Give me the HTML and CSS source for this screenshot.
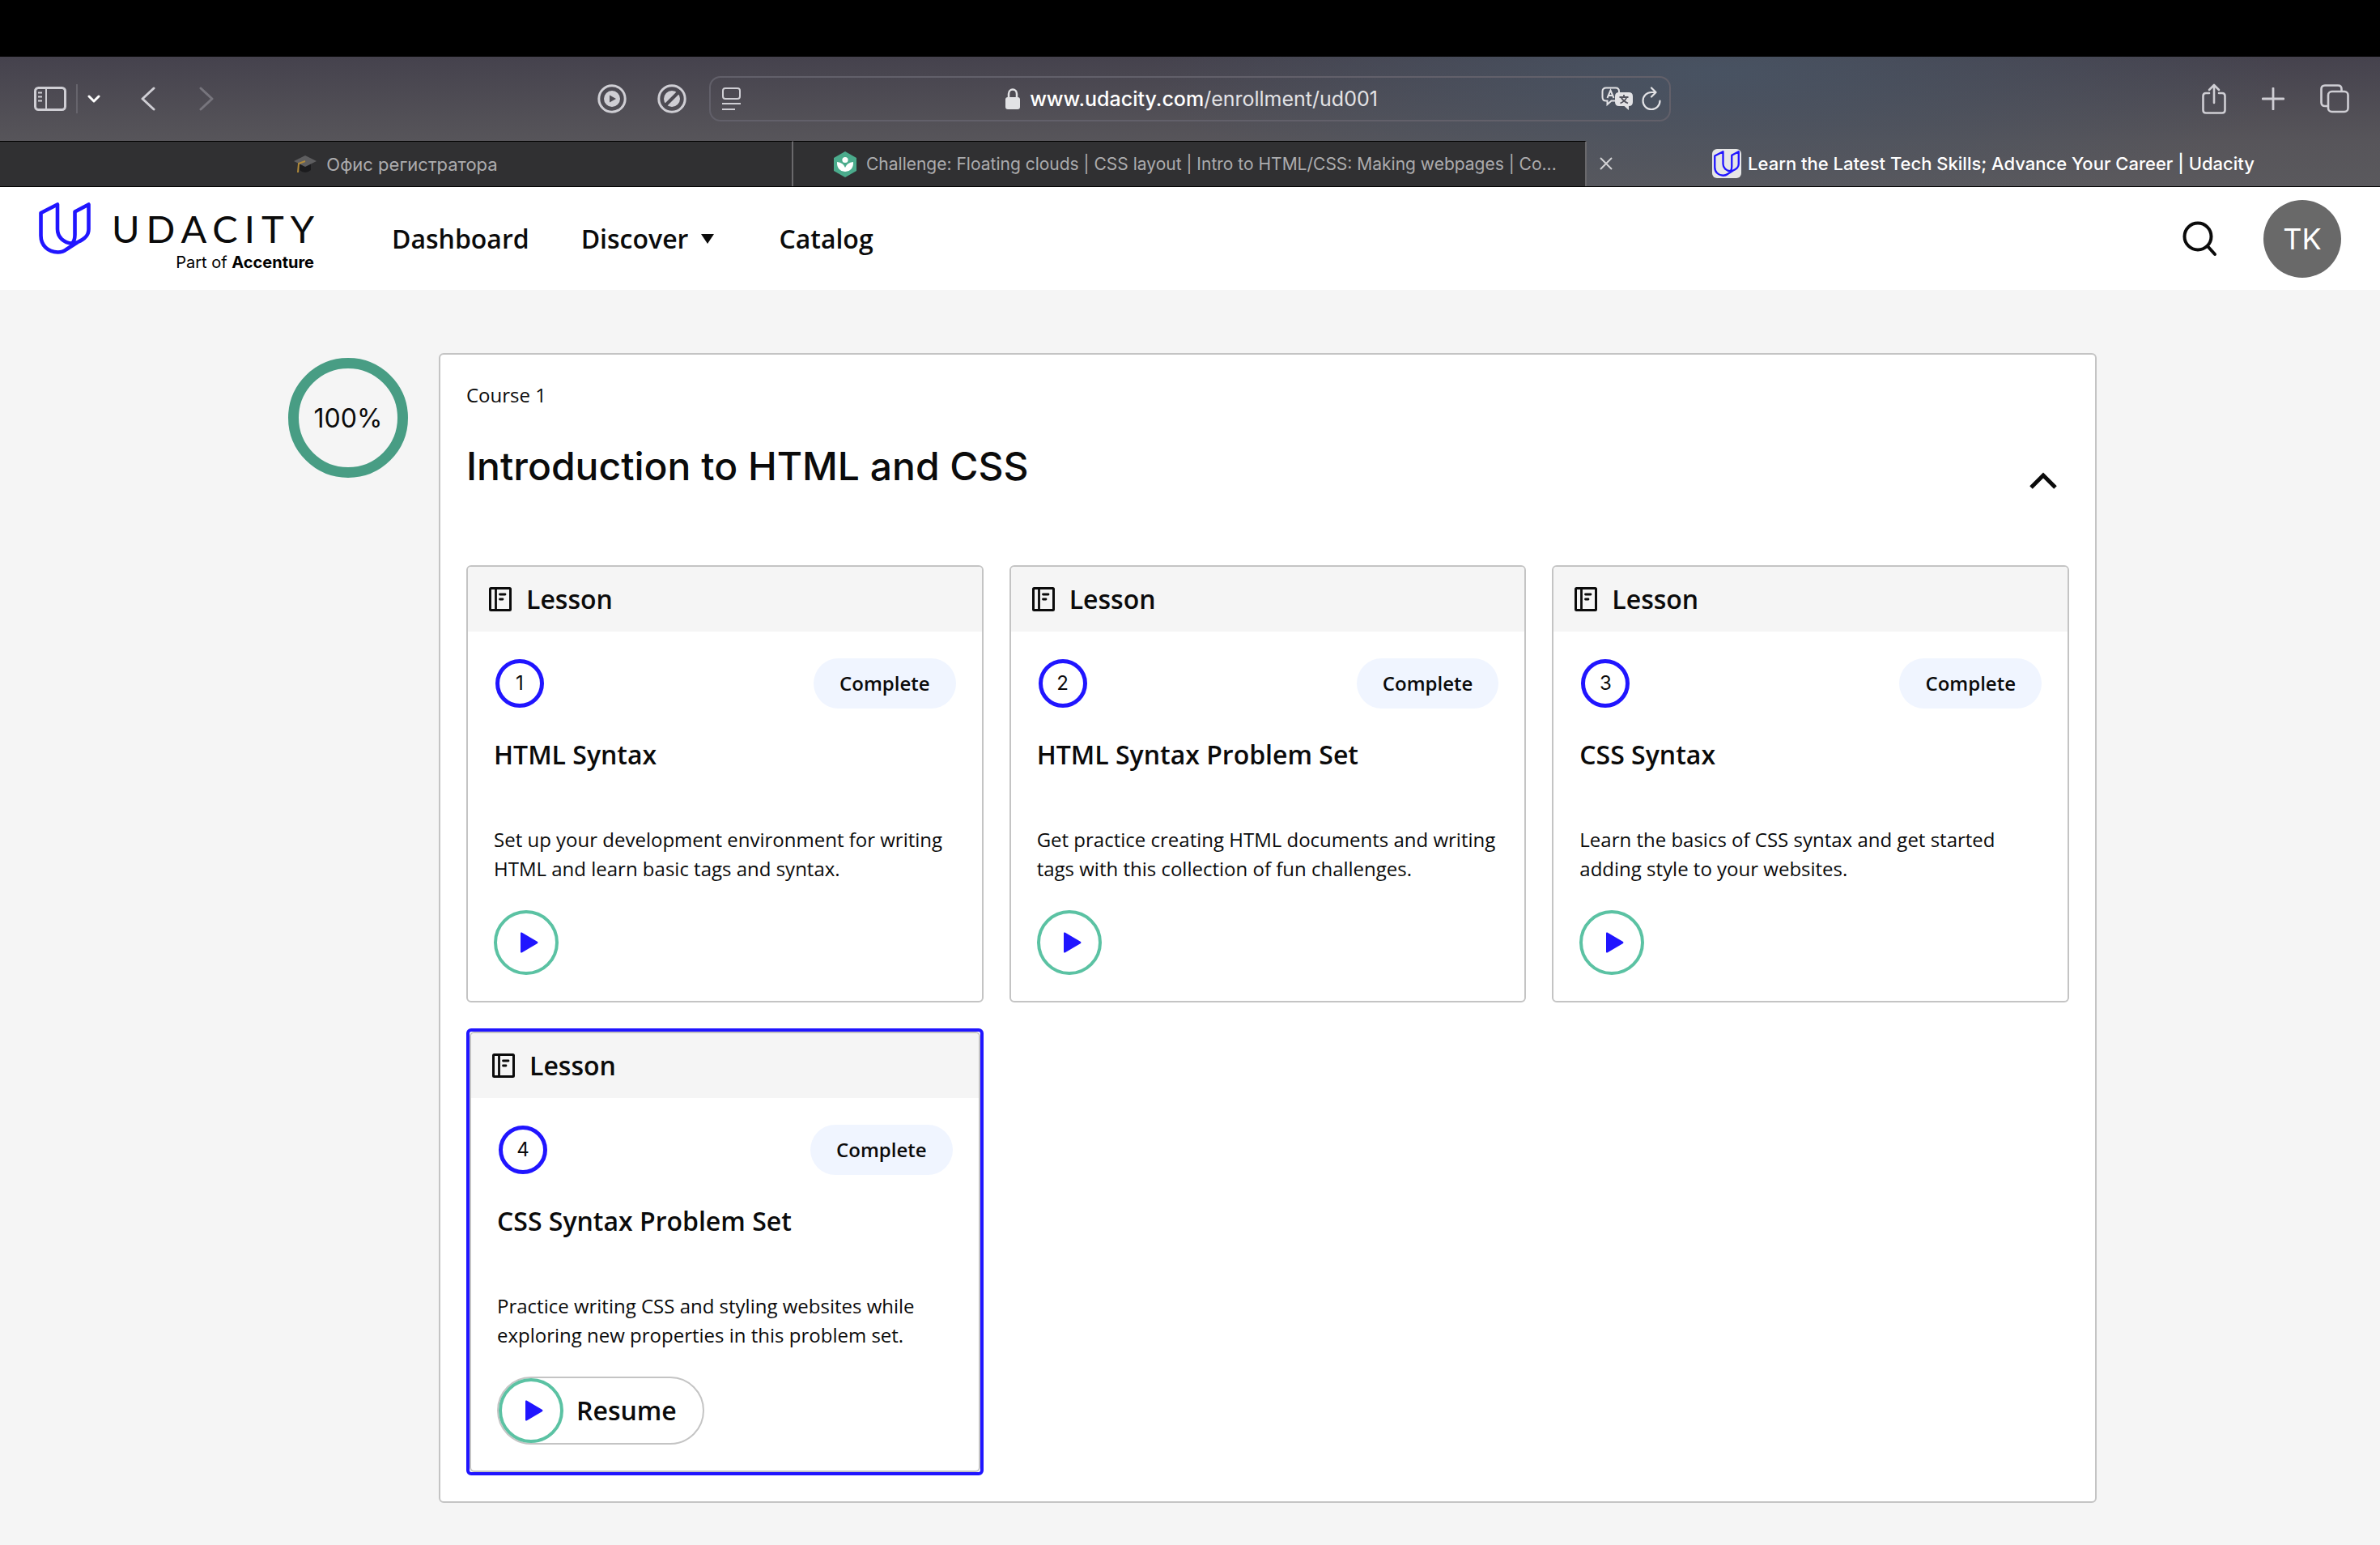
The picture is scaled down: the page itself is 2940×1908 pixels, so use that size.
FILE: index.html
```html
<!DOCTYPE html>
<html lang="en">
<head>
<meta charset="utf-8">
<title>Learn the Latest Tech Skills; Advance Your Career | Udacity</title>
<link rel="stylesheet" href="styles.css">
</head>
<body>
<svg class="sprite" aria-hidden="true">
  <symbol id="u-mark" viewBox="0 0 64 64">
    <path d="M2.500 13 L23 2.500 V33 C23 43 31 50 41 50.500 C44 48 44.500 44 44.500 40 V11.500 L61.500 2.500 V33 C61.500 42 55 46 48 49 L34 58 C31 60.500 28 61.500 23.500 61.500 C11 61 2.500 53 2.500 41 Z" fill="none" stroke="currentColor" stroke-width="4.600" stroke-linejoin="round"/>
  </symbol>
  <symbol id="book" viewBox="0 0 28 30">
    <rect x="1.500" y="1.500" width="25" height="27" rx="1" fill="none" stroke="currentColor" stroke-width="3"/>
    <path d="M8.500 1 V29 M13.500 9 H20 M13.500 15 H17" fill="none" stroke="currentColor" stroke-width="2.800" stroke-linecap="round"/>
  </symbol>
  <symbol id="play" viewBox="0 0 22 26">
    <path d="M0 1.500 Q0 0 1.500 0.600 L21 12 Q22 13 21 14 L1.500 25.400 Q0 26 0 24.500 Z" fill="currentColor"/>
  </symbol>
</svg>

<div class="notch-bar"></div>
<div class="browser">
  <div class="toolbar">
    <div class="tools tools-left">
      <button class="tool" aria-label="Sidebar"><svg width="40" height="32" viewBox="0 0 40 32"><rect x="1.500" y="2.500" width="37" height="27" rx="4" fill="none" stroke="currentColor" stroke-width="3"/><path d="M15 3 V29 M5 8.500 H10 M5 13.500 H10 M5 18.500 H10" fill="none" stroke="currentColor" stroke-width="2"/></svg></button>
      <span class="divider"></span>
      <button class="tool bright" aria-label="Tab groups"><svg width="16" height="12" viewBox="0 0 16 12"><path d="M2 3 L8 9 L14 3" fill="none" stroke="currentColor" stroke-width="3" stroke-linecap="round" stroke-linejoin="round"/></svg></button>
      <button class="tool back" aria-label="Back"><svg width="18" height="30" viewBox="0 0 18 30"><path d="M16 2 L2 15 L16 28" fill="none" stroke="currentColor" stroke-width="3" stroke-linecap="round" stroke-linejoin="round"/></svg></button>
      <button class="tool forward" aria-label="Forward"><svg width="18" height="30" viewBox="0 0 18 30"><path d="M2 2 L16 15 L2 28" fill="none" stroke="currentColor" stroke-width="3" stroke-linecap="round" stroke-linejoin="round"/></svg></button>
    </div>
    <div class="tools tools-ext">
      <button class="tool" aria-label="Media blocker"><svg width="36" height="36" viewBox="0 0 36 36"><circle cx="18" cy="18" r="16.200" fill="none" stroke="currentColor" stroke-width="3"/><path fill-rule="evenodd" d="M18 8 A10 10 0 1 0 18 28 A10 10 0 1 0 18 8 Z M15 13.500 L23 18 L15 22.500 Z" fill="currentColor"/></svg></button>
      <button class="tool" aria-label="Content blocker"><svg width="36" height="36" viewBox="0 0 36 36"><circle cx="18" cy="18" r="16.200" fill="none" stroke="currentColor" stroke-width="3"/><circle cx="18" cy="18" r="10" fill="currentColor"/><path d="M9 27 L27 9" stroke="#4b4951" stroke-width="4"/></svg></button>
    </div>
    <div class="address">
      <svg width="24" height="28" viewBox="0 0 24 28"><rect x="1" y="1" width="21" height="13" rx="3" fill="none" stroke="currentColor" stroke-width="2"/><path d="M0 20 H23 M0 27 H16" stroke="currentColor" stroke-width="2"/></svg>
      <div class="url"><svg width="18" height="26" viewBox="0 0 18 26"><rect x="0" y="11" width="18" height="15" rx="3" fill="currentColor"/><path d="M4 12 V7 A5 5.500 0 0 1 14 7 V12" fill="none" stroke="currentColor" stroke-width="2.500"/></svg><span class="url-text"><b>www.udacity.com</b>/enrollment/ud001</span></div>
      <div class="address-actions">
        <button class="tool pale" aria-label="Translate"><svg width="40" height="30" viewBox="0 0 40 30"><path d="M17 17.500 H12.500 L7.500 22 V17.500 H6 Q1.500 17.500 1.500 13 V6 Q1.500 1.500 6 1.500 H18 Q22 1.500 22 6 V8" fill="none" stroke="currentColor" stroke-width="2"/><path d="M7.500 14 L11.500 4.500 L15.500 14 M9 11 H14" fill="none" stroke="currentColor" stroke-width="2"/><path d="M22 7 H34 Q39 7 39 12 V19 Q39 24 34 24 V29 L28.500 24 H22 Q17 24 17 19 V12 Q17 7 22 7 Z" fill="currentColor"/><path d="M22.500 13 H33.500 M28 10 V13 M24.500 13 Q27 18 33 20.500 M31.500 13 Q29.500 18 23.500 20.500" fill="none" stroke="#50515b" stroke-width="1.800"/></svg></button>
        <button class="tool pale" aria-label="Reload"><svg width="24" height="30" viewBox="0 0 24 30"><path d="M16 7 H12 A10.500 10.500 0 1 0 22.500 17.500" fill="none" stroke="currentColor" stroke-width="2.200" stroke-linecap="round"/><path d="M12 1.500 L17.500 7 L12 12.500" fill="none" stroke="currentColor" stroke-width="2.200" stroke-linecap="round" stroke-linejoin="round"/></svg></button>
      </div>
    </div>
    <div class="tools tools-right">
      <button class="tool" aria-label="Share"><svg width="30" height="38" viewBox="0 0 30 38"><path d="M9 12 H5 Q1.500 12 1.500 15.500 V33 Q1.500 36.500 5 36.500 H25 Q28.500 36.500 28.500 33 V15.500 Q28.500 12 25 12 H21 M15 24 V2 M9 8 L15 2 L21 8" fill="none" stroke="currentColor" stroke-width="2.600" stroke-linecap="round" stroke-linejoin="round"/></svg></button>
      <button class="tool" aria-label="New tab"><svg width="28" height="28" viewBox="0 0 28 28"><path d="M1 14 H27 M14 1 V27" stroke="currentColor" stroke-width="2.800" stroke-linecap="round"/></svg></button>
      <button class="tool" aria-label="Tab overview"><svg width="36" height="36" viewBox="0 0 36 36"><rect x="10" y="9" width="24.500" height="25" rx="4.500" fill="none" stroke="currentColor" stroke-width="2.600"/><path d="M9 27 H6 Q1.500 27 1.500 22.500 V6 Q1.500 1.500 6 1.500 H22 Q26.500 1.500 26.500 6 V8" fill="none" stroke="currentColor" stroke-width="2.600"/></svg></button>
    </div>
  </div>
  <div class="tabs">
    <a class="tab" href="#"><svg width="28" height="22" viewBox="0 0 28 22"><path d="M7 10 V18 Q14 24 21 18 V10 Z" fill="#1c1c1e"/><path d="M14 0 L28 7 L14 14 L0 7 Z" fill="#5e5e60"/><path d="M14 7 L6 10 L5 21" fill="none" stroke="#b08a3a" stroke-width="2"/></svg><span class="tab-text">Офис регистратора</span></a>
    <a class="tab tab-long" href="#"><svg width="28" height="32" viewBox="0 0 28 32"><path d="M14 0 L28 8 V24 L14 32 L0 24 V8 Z" fill="#4bab8c"/><circle cx="14" cy="10.500" r="3.600" fill="#fff"/><path d="M14 25 Q3.500 24 4 13 Q12 14 14 20 Q16 14 24 13 Q24.500 24 14 25 Z" fill="#fff"/></svg><span class="tab-text">Challenge: Floating clouds | CSS layout | Intro to HTML/CSS: Making webpages | Co...</span></a>
    <div class="tab active"><button class="tool close" aria-label="Close tab"><svg width="16" height="16" viewBox="0 0 16 16"><path d="M1 1 L15 15 M15 1 L1 15" stroke="currentColor" stroke-width="2"/></svg></button><a class="tab-link" href="#"><span class="favicon"><svg width="32" height="32"><use href="#u-mark"/></svg></span><span class="tab-text">Learn the Latest Tech Skills; Advance Your Career | Udacity</span></a></div>
  </div>
</div>

<header class="site-header">
  <a class="logo" href="#" aria-label="Udacity, part of Accenture">
    <svg class="logo-mark" width="64" height="64"><use href="#u-mark"/></svg>
    <span class="logo-words"><span class="wordmark">UDACITY</span><span class="tagline">Part of <b>Accenture</b></span></span>
  </a>
  <nav class="nav">
    <a href="#">Dashboard</a>
    <a class="has-menu" href="#">Discover <svg class="caret" width="16" height="12" viewBox="0 0 16 12"><path d="M0 0 H16 L8 12 Z" fill="currentColor"/></svg></a>
    <a href="#">Catalog</a>
  </nav>
  <div class="account">
    <button class="search" aria-label="Search"><svg width="44" height="44" viewBox="0 0 44 44"><circle cx="19" cy="19" r="16.500" fill="none" stroke="currentColor" stroke-width="4"/><path d="M31 31 L40 41" stroke="currentColor" stroke-width="4" stroke-linecap="round"/></svg></button>
    <button class="avatar">TK</button>
  </div>
</header>

<main class="page">
  <div class="progress">100%</div>
  <section class="course">
    <p class="course-label">Course 1</p>
    <div class="course-head">
      <h1>Introduction to HTML and CSS</h1>
      <button class="collapse" aria-label="Collapse course"><svg width="36" height="24" viewBox="0 0 36 24"><path d="M3 20 L18 5 L33 20" fill="none" stroke="currentColor" stroke-width="5"/></svg></button>
    </div>
    <div class="lessons">
      <article class="lesson"><div class="lesson-card">
        <div class="lesson-type"><svg width="28" height="30"><use href="#book"/></svg>Lesson</div>
        <div class="lesson-body">
          <div class="lesson-status"><span class="number">1</span><span class="pill">Complete</span></div>
          <h2>HTML Syntax</h2>
          <p>Set up your development environment for writing HTML and learn basic tags and syntax.</p>
          <button class="play" aria-label="Open HTML Syntax"><svg width="22" height="26"><use href="#play"/></svg></button>
        </div>
      </div></article>
      <article class="lesson"><div class="lesson-card">
        <div class="lesson-type"><svg width="28" height="30"><use href="#book"/></svg>Lesson</div>
        <div class="lesson-body">
          <div class="lesson-status"><span class="number">2</span><span class="pill">Complete</span></div>
          <h2>HTML Syntax Problem Set</h2>
          <p>Get practice creating HTML documents and writing tags with this collection of fun challenges.</p>
          <button class="play" aria-label="Open HTML Syntax Problem Set"><svg width="22" height="26"><use href="#play"/></svg></button>
        </div>
      </div></article>
      <article class="lesson"><div class="lesson-card">
        <div class="lesson-type"><svg width="28" height="30"><use href="#book"/></svg>Lesson</div>
        <div class="lesson-body">
          <div class="lesson-status"><span class="number">3</span><span class="pill">Complete</span></div>
          <h2>CSS Syntax</h2>
          <p>Learn the basics of CSS syntax and get started adding style to your websites.</p>
          <button class="play" aria-label="Open CSS Syntax"><svg width="22" height="26"><use href="#play"/></svg></button>
        </div>
      </div></article>
      <article class="lesson current"><div class="lesson-card">
        <div class="lesson-type"><svg width="28" height="30"><use href="#book"/></svg>Lesson</div>
        <div class="lesson-body">
          <div class="lesson-status"><span class="number">4</span><span class="pill">Complete</span></div>
          <h2>CSS Syntax Problem Set</h2>
          <p>Practice writing CSS and styling websites while exploring new properties in this problem set.</p>
          <button class="resume"><span class="play"><svg width="22" height="26"><use href="#play"/></svg></span>Resume</button>
        </div>
      </div></article>
    </div>
  </section>
</main>
</body>
</html>
```
FILE: styles.css
```css
:root {
  --ink: #0b0b0b;
  --blue: #2015ff;
  --line: #c4c4c4;
  --mist: #f5f5f5;
}

* { box-sizing: border-box; }

body {
  margin: 0;
  background: var(--mist);
  color: var(--ink);
  font: 24px/36px "Open Sans", sans-serif;
}

svg { display: block; flex: none; }
h1, h2, p { margin: 0; }
a { color: inherit; text-decoration: none; }
button {
  margin: 0;
  padding: 0;
  border: 0;
  background: none;
  color: inherit;
  font: inherit;
}
.sprite { position: absolute; width: 0; height: 0; }

/* Browser window */
.notch-bar { height: 70px; background: #000; }

.browser {
  background:
    radial-gradient(ellipse 700px 180px at 2120px 20px, rgba(72, 84, 100, 0.9), rgba(72, 84, 100, 0)),
    linear-gradient(#45424d, #57555a 65%, #5a595d);
  border-bottom: 1px solid #000;
  color: #cfced4;
  font-family: Inter, sans-serif;
}

.toolbar {
  display: grid;
  grid-template-columns: 738fr 138px 1188px 876fr;
  align-items: center;
  height: 104px;
}
.tools { display: flex; align-items: center; }
.tools-left { padding-left: 42px; }
.tools-ext { gap: 38px; }
.tools-right { justify-content: flex-end; gap: 44px; padding-right: 38px; }
.divider { width: 2px; height: 36px; margin: 0 12px; background: #66646c; }
.bright { color: #fff; }
.pale { color: #e2e2e5; }
.back { margin-left: 50px; }
.forward { margin-left: 54px; color: #77757d; }

.address {
  display: grid;
  grid-template-columns: 1fr auto 1fr;
  align-items: center;
  height: 56px;
  padding: 0 10px 0 14px;
  border: 2px solid #62606a;
  border-radius: 14px;
}
.url { display: flex; align-items: center; gap: 12px; color: #e2e2e5; }
.url-text { font-size: 25px; }
.url b { color: #fff; font-weight: 500; }
.address-actions { display: flex; justify-content: flex-end; gap: 10px; }

.tabs { display: grid; grid-template-columns: repeat(3, minmax(0, 1fr)); }
.tab {
  display: flex;
  align-items: center;
  justify-content: center;
  gap: 12px;
  height: 56px;
  padding: 0 12px;
  border-top: 1px solid #000;
  border-right: 2px solid #6a696c;
  background: #303032;
  color: #acacae;
  font-size: 22px;
}
.tab-long { justify-content: flex-start; padding-left: 50px; font-size: 21px; }
.tab-text { overflow: hidden; text-overflow: ellipsis; white-space: nowrap; }
.active {
  display: grid;
  grid-template-columns: 16px minmax(0, 1fr) 16px;
  gap: 0;
  padding: 0 16px;
  border: 0;
  background: none;
  color: #fff;
  font-weight: 500;
}
.close { color: #d2d2d4; }
.tab-link {
  display: flex;
  align-items: center;
  justify-content: center;
  gap: 8px;
}
.favicon {
  display: grid;
  place-items: center;
  width: 36px;
  height: 36px;
  border-radius: 6px;
  background: #e6e6e6;
  color: var(--blue);
}

/* Site header */
.site-header {
  display: flex;
  align-items: center;
  height: 127px;
  padding: 0 48px;
  background: #fff;
}
.logo { display: flex; align-items: flex-start; gap: 26px; height: 90px; }
.logo-mark { color: var(--blue); }
.logo-words { display: flex; flex-direction: column; align-items: flex-end; padding-top: 4px; }
/* The brand wordmark is set with open tracking. */
.wordmark { font: 47px/56px Lato, sans-serif; letter-spacing: 8px; }
.tagline { padding-right: 8px; font: 20px/28px Inter, sans-serif; color: #000; }
.nav { display: flex; gap: 64px; margin-left: 88px; font-size: 32px; font-weight: 600; line-height: 44px; }
.nav a { display: flex; align-items: center; gap: 16px; }
.nav .has-menu { padding-right: 16px; }
.account { display: flex; align-items: center; gap: 56px; margin-left: auto; }
.avatar {
  width: 96px;
  height: 96px;
  border-radius: 50%;
  background: #696969;
  color: #fff;
  font: 36px Inter, sans-serif;
}

/* Course */
.page {
  display: grid;
  grid-template-columns: 148px minmax(0, 1fr);
  align-items: start;
  gap: 38px;
  padding: 78px 350px 52px 356px;
}
.progress {
  display: grid;
  place-items: center;
  height: 148px;
  margin-top: 6px;
  border: 13px solid #489d84;
  border-radius: 50%;
  font: 32px Inter, sans-serif;
}
.course {
  padding: 32px;
  border: 2px solid var(--line);
  border-radius: 6px;
  background: #fff;
}
.course-head { display: flex; justify-content: space-between; margin: 38px 0 90px; }
.course-head h1 { font: 500 48px/64px Inter, sans-serif; }
.collapse { padding: 38px 14px 0 0; align-self: flex-start; }

.lessons { display: grid; grid-template-columns: repeat(3, minmax(0, 1fr)); gap: 32px; }
.lesson-card {
  overflow: hidden;
  border: 2px solid var(--line);
  border-radius: 6px;
}
.current { border: 4px solid var(--blue); border-radius: 6px; }
.lesson-type {
  display: flex;
  align-items: center;
  gap: 18px;
  height: 80px;
  padding: 0 26px;
  background: var(--mist);
  font-size: 32px;
  font-weight: 600;
}
.lesson-body { padding: 33px 32px 32px; }
.lesson-status { display: flex; align-items: center; justify-content: space-between; padding-left: 2px; }
.number {
  display: grid;
  place-items: center;
  width: 60px;
  height: 60px;
  border: 5px solid var(--blue);
  border-radius: 50%;
  font-family: Inter, sans-serif;
}
.pill {
  padding: 13px 32px;
  border-radius: 31px;
  background: #f0f5ff;
  font-weight: 600;
}
.lesson h2 { min-height: 109px; margin-top: 35px; font-size: 32px; font-weight: 600; line-height: 44px; }
.play {
  display: grid;
  place-items: center;
  width: 80px;
  height: 80px;
  padding-left: 8px;
  border: 4px solid #5bc2a3;
  border-radius: 50%;
  color: var(--blue);
}
.lesson-body > .play, .resume { margin-top: 33px; }
.resume {
  display: flex;
  align-items: center;
  gap: 16px;
  padding-right: 32px;
  border: 2px solid var(--line);
  border-radius: 42px;
  font-size: 32px;
  font-weight: 600;
}
```
